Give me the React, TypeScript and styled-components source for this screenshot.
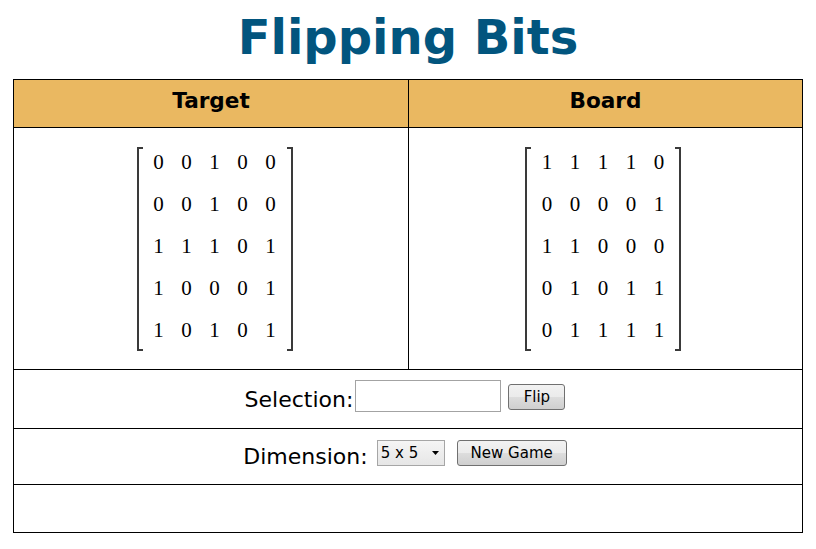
import React from "react";
import styled, { createGlobalStyle } from "styled-components";

const Global = createGlobalStyle`
  html, body { margin: 0; padding: 0; background: #fff; }
  body { font-family: "DejaVu Sans", sans-serif; color: #000; }
  * { box-sizing: border-box; }
`;

const Page = styled.div`
  padding: 9px 13px 0 13px;
`;

const Title = styled.h1`
  margin: 0 0 14px 0;
  font-family: "DejaVu Sans", sans-serif;
  font-weight: bold;
  font-size: 48px;
  line-height: 56px;
  text-align: center;
  color: #02557e;
`;

const Frame = styled.div`
  border: 1px solid #000;
`;

const Split = styled.div<{ $h: number; $head?: boolean }>`
  display: grid;
  grid-template-columns: 395px 1fr;
  height: ${(p) => p.$h}px;
  border-bottom: 1px solid #000;
  background: ${(p) => (p.$head ? "#eab861" : "#fff")};
`;

const HeadCell = styled.div`
  padding-top: 9px;
  line-height: 24px;
  font-size: 21.6px;
  font-weight: bold;
  text-align: center;
  &:first-child { border-right: 1px solid #000; }
`;

const BodyCell = styled.div<{ $shift: number }>`
  display: flex;
  justify-content: center;
  align-items: flex-start;
  padding-top: 13px;
  padding-left: ${(p) => (p.$shift > 0 ? p.$shift : 0)}px;
  padding-right: ${(p) => (p.$shift < 0 ? -p.$shift : 0)}px;
  &:first-child { border-right: 1px solid #000; }
`;

const MatrixBox = styled.div`
  display: flex;
  align-items: stretch;
`;

const Bracket = styled.div<{ $side: "left" | "right" }>`
  width: 6px;
  margin: 6px 0 0 0;
  border: 2px solid #3a3a3a;
  ${(p) => (p.$side === "left" ? "border-right: none;" : "border-left: none;")}
`;

const Cells = styled.div`
  display: grid;
  grid-template-columns: repeat(5, 28px);
  grid-auto-rows: 42px;
  padding: 0 2px;
`;

const Digit = styled.div`
  font-family: "Liberation Serif", "Times New Roman", serif;
  font-size: 21px;
  line-height: 42px;
  text-align: center;
`;

const Row = styled.div<{ $h: number; $last?: boolean }>`
  display: flex;
  justify-content: center;
  align-items: flex-start;
  padding-right: 6px;
  height: ${(p) => p.$h}px;
  border-bottom: ${(p) => (p.$last ? "none" : "1px solid #000")};
`;

const Label = styled.span<{ $top: number }>`
  margin-top: ${(p) => p.$top}px;
  font-size: 22px;
  line-height: 26px;
  white-space: nowrap;
`;

const TextInput = styled.input<{ $top: number }>`
  margin: ${(p) => p.$top}px 0 0 2px;
  width: 146px;
  height: 32px;
  border: 1px solid #a3a3a3;
  background: #fff;
  padding: 0 4px;
  font-size: 15px;
  outline: none;
`;

const Button = styled.button<{ $top: number; $w: number; $gap: number }>`
  margin: ${(p) => p.$top}px 0 0 ${(p) => p.$gap}px;
  width: ${(p) => p.$w}px;
  height: 26px;
  padding: 0;
  border: 1px solid #707070;
  border-radius: 3px;
  background: linear-gradient(#f2f2f2 0%, #ebebeb 50%, #dddddd 51%, #cfcfcf 100%);
  font-family: "DejaVu Sans", sans-serif;
  font-size: 15px;
  color: #000;
  line-height: 22px;
`;

const SelectWrap = styled.div<{ $top: number; $gap: number }>`
  position: relative;
  margin: ${(p) => p.$top}px 0 0 ${(p) => p.$gap}px;
  width: 68px;
  height: 26px;
`;

const Select = styled.select`
  appearance: none;
  -webkit-appearance: none;
  width: 100%;
  height: 100%;
  border: 1px solid #a6a6a6;
  border-radius: 0;
  background: linear-gradient(#f5f5f5, #e6e6e6);
  padding: 0 0 0 3px;
  font-family: "DejaVu Sans", sans-serif;
  font-size: 15px;
  color: #000;
  outline: none;
`;

const Arrow = styled.svg`
  position: absolute;
  right: 6px;
  top: 11px;
  pointer-events: none;
`;

const target = [
  [0, 0, 1, 0, 0],
  [0, 0, 1, 0, 0],
  [1, 1, 1, 0, 1],
  [1, 0, 0, 0, 1],
  [1, 0, 1, 0, 1],
];

const board = [
  [1, 1, 1, 1, 0],
  [0, 0, 0, 0, 1],
  [1, 1, 0, 0, 0],
  [0, 1, 0, 1, 1],
  [0, 1, 1, 1, 1],
];

function Matrix({ data }: { data: number[][] }) {
  return (
    <MatrixBox>
      <Bracket $side="left" />
      <Cells>
        {data.flatMap((r, i) =>
          r.map((v, j) => <Digit key={`${i}-${j}`}>{v}</Digit>)
        )}
      </Cells>
      <Bracket $side="right" />
    </MatrixBox>
  );
}

export default function App() {
  return (
    <Page>
      <Global />
      <Title>Flipping Bits</Title>
      <Frame>
        <Split $h={48} $head>
          <HeadCell>Target</HeadCell>
          <HeadCell>Board</HeadCell>
        </Split>
        <Split $h={242}>
          <BodyCell $shift={7}>
            <Matrix data={target} />
          </BodyCell>
          <BodyCell $shift={-5}>
            <Matrix data={board} />
          </BodyCell>
        </Split>
        <Row $h={59}>
          <Label $top={17}>Selection:</Label>
          <TextInput $top={10} type="text" />
          <Button $top={14} $w={57} $gap={7}>Flip</Button>
        </Row>
        <Row $h={56}>
          <Label $top={15}>Dimension:</Label>
          <SelectWrap $top={11} $gap={9}>
            <Select defaultValue="5">
              <option value="3">3 x 3</option>
              <option value="4">4 x 4</option>
              <option value="5">5 x 5</option>
            </Select>
            <Arrow width="7" height="4" viewBox="0 0 7 4">
              <path d="M0 0 H7 L3.5 4 Z" fill="#000" />
            </Arrow>
          </SelectWrap>
          <Button $top={11} $w={110} $gap={12}>New Game</Button>
        </Row>
        <Row $h={47} $last />
      </Frame>
    </Page>
  );
}
